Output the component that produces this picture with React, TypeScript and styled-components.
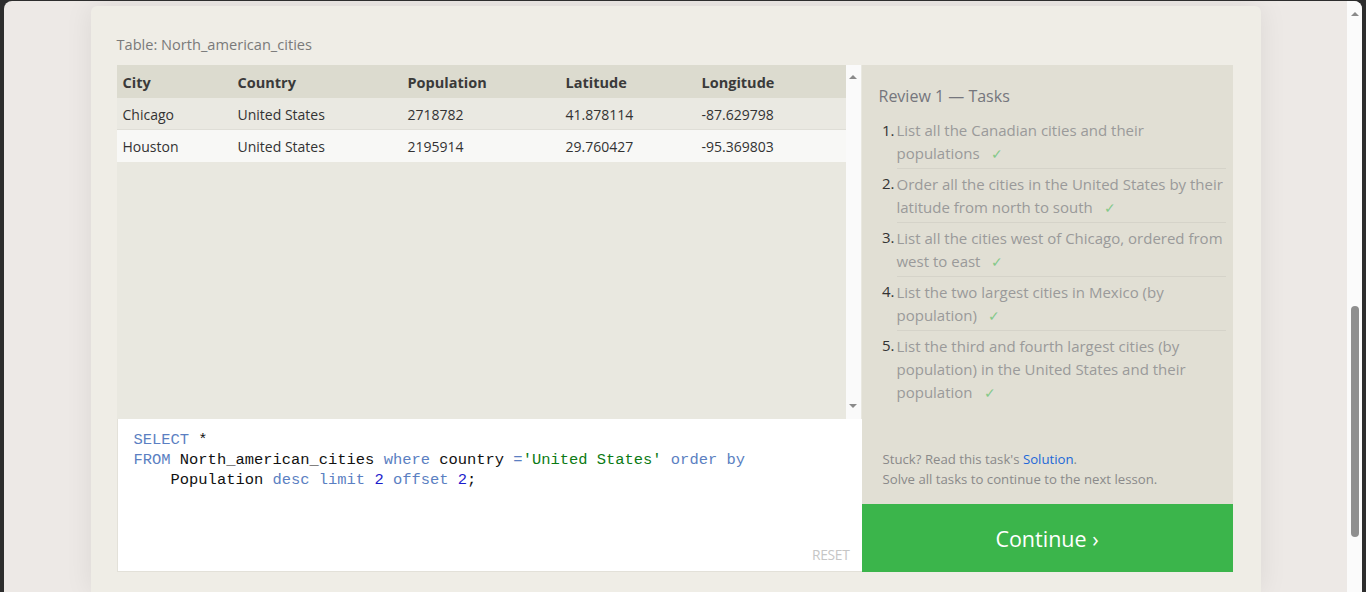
import React from 'react';
import styled, { createGlobalStyle } from 'styled-components';

const GlobalStyle = createGlobalStyle`
  html, body {
    margin: 0;
    padding: 0;
    background: #2d2d2d;
    overflow: hidden;
  }
`;

const Frame = styled.div`
  height: 592px;
  padding: 1px 4px 0 4px;
  box-sizing: border-box;
  display: flex;
`;

const Window = styled.div`
  flex: 1;
  display: flex;
  background: #ede9e6;
  border-radius: 8px 8px 0 0;
  overflow: hidden;
`;

const Page = styled.div`
  flex: 1;
  display: flex;
  justify-content: center;
  padding-top: 5px;
  overflow: hidden;
`;

const Card = styled.div`
  width: 1170px;
  background: #efede6;
  border-radius: 6px 6px 0 0;
  box-shadow: 0 0 28px rgba(0, 0, 0, 0.08);
  padding: 28px 28px 0 26px;
  box-sizing: border-box;
  font-family: 'Open Sans', 'Noto Sans', sans-serif;
`;

const TableLabel = styled.div`
  font-size: 14.6px;
  line-height: 20px;
  color: #7a7a7a;
  margin-bottom: 11px;
`;

const Workspace = styled.div`
  display: flex;
  height: 507px;
`;

const LeftColumn = styled.div`
  width: 745px;
  display: flex;
  flex-direction: column;
`;

const TableArea = styled.div`
  height: 354px;
  display: flex;
  background: #e9e8e0;
`;

const TableBody = styled.div`
  flex: 1;
`;

const Row = styled.div<{ $variant: 'head' | 'odd' | 'even' }>`
  display: grid;
  grid-template-columns: 115px 170px 158px 136px 1fr;
  height: ${(p) => (p.$variant === 'head' ? '33px' : '32px')};
  align-items: center;
  background: ${(p) =>
    p.$variant === 'head' ? '#dcdbcf' : p.$variant === 'odd' ? '#eae9e2' : '#f8f8f6'};
  border-bottom: ${(p) => (p.$variant === 'odd' ? '1px solid #dfded7' : 'none')};
  font-size: ${(p) => (p.$variant === 'head' ? '14.5px' : '14px')};
  font-weight: ${(p) => (p.$variant === 'head' ? 700 : 400)};
  color: ${(p) => (p.$variant === 'head' ? '#3a3a3a' : '#333')};
  padding-top: ${(p) => (p.$variant === 'odd' || p.$variant === 'head' ? '1px' : '0')};
  box-sizing: border-box;
`;

const Cell = styled.div`
  padding-left: 6px;
  white-space: nowrap;
`;

const InnerScroll = styled.div`
  width: 15px;
  background: #fafafa;
  display: flex;
  flex-direction: column;
  justify-content: space-between;
  align-items: center;
  padding: 10px 0 11px;
  box-sizing: border-box;
  margin-right: 1px;
`;

const Arrow = styled.div<{ $down?: boolean }>`
  width: 0;
  height: 0;
  border-left: 4px solid transparent;
  border-right: 4px solid transparent;
  ${(p) =>
    p.$down ? 'border-top: 4px solid #8a8a8a;' : 'border-bottom: 4px solid #8a8a8a;'}
`;

const Editor = styled.div`
  flex: 1;
  background: #fff;
  border-left: 1px solid #e3e1d9;
  border-bottom: 1px solid #e3e1d9;
  display: flex;
  flex-direction: column;
  padding: 11px 12px 7px 16px;
`;

const Code = styled.pre`
  flex: 1;
  margin: 0;
  font-family: 'Liberation Mono', 'DejaVu Sans Mono', monospace;
  font-size: 15.45px;
  line-height: 20px;
  color: #111;
`;

const Kw = styled.span`
  color: #5b7fc2;
`;

const Num = styled.span`
  color: #1c1ccc;
`;

const Str = styled.span`
  color: #0b7a14;
`;

const EditorFooter = styled.div`
  display: flex;
  justify-content: flex-end;
`;

const ResetButton = styled.span`
  font-size: 13.8px;
  letter-spacing: -0.3px;
  color: #c6c6c6;
  line-height: 18px;
`;

const RightColumn = styled.div`
  width: 371px;
  display: flex;
  flex-direction: column;
`;

const TaskPanel = styled.div`
  flex: 1;
  background: #e1dfd4;
  padding: 20px 7px 15px 17px;
  display: flex;
  flex-direction: column;
`;

const PanelTitle = styled.div`
  font-size: 16px;
  line-height: 22px;
  color: #75767d;
  margin-bottom: 8px;
`;

const TaskList = styled.ol`
  list-style: none;
  margin: 0;
  padding: 0;
`;

const TaskItem = styled.li`
  display: flex;
  & + & > div:last-child {
    border-top: 1px solid #d5d3c9;
  }
`;

const TaskNumber = styled.span`
  width: 18px;
  flex: none;
  text-align: right;
  padding-right: 2px;
  box-sizing: border-box;
  font-size: 15px;
  line-height: 23px;
  color: #333;
  padding-top: 4px;
`;

const TaskText = styled.div`
  flex: 1;
  font-size: 15px;
  line-height: 23px;
  color: #9a9a9a;
  padding: 4px 0 3px;
`;

const Check = styled.span`
  display: inline-block;
  color: #84c98a;
  margin-left: 11px;
  font-size: 14px;
  line-height: 14px;
`;

const Help = styled.div`
  margin-top: auto;
  padding-left: 4px;
  font-size: 13.2px;
  line-height: 20px;
  color: #8a8a8a;
`;

const Link = styled.a`
  color: #2168d8;
  text-decoration: none;
`;

const ContinueButton = styled.button`
  height: 68px;
  border: none;
  background: #3bb54b;
  color: #fff;
  font-family: 'Open Sans', 'Noto Sans', sans-serif;
  font-size: 21.5px;
  cursor: pointer;
`;

const PageScroll = styled.div`
  width: 15px;
  background: #fbfbfb;
  display: flex;
  flex-direction: column;
  align-items: center;
  padding-top: 11px;
  box-sizing: border-box;
`;

const Thumb = styled.div`
  width: 8px;
  height: 231px;
  margin-top: 290px;
  border-radius: 4px;
  background: #8f8f8f;
`;

const columns = ['City', 'Country', 'Population', 'Latitude', 'Longitude'];

const rows = [
  ['Chicago', 'United States', '2718782', '41.878114', '-87.629798'],
  ['Houston', 'United States', '2195914', '29.760427', '-95.369803'],
];

const tasks = [
  'List all the Canadian cities and their populations',
  'Order all the cities in the United States by their latitude from north to south',
  'List all the cities west of Chicago, ordered from west to east',
  'List the two largest cities in Mexico (by population)',
  'List the third and fourth largest cities (by population) in the United States and their population',
];

export default function App() {
  return (
    <>
      <GlobalStyle />
      <Frame>
        <Window>
          <Page>
            <Card>
              <TableLabel>Table: North_american_cities</TableLabel>
              <Workspace>
                <LeftColumn>
                  <TableArea>
                    <TableBody>
                      <Row $variant="head">
                        {columns.map((c) => (
                          <Cell key={c}>{c}</Cell>
                        ))}
                      </Row>
                      {rows.map((r, i) => (
                        <Row key={r[0]} $variant={i % 2 === 0 ? 'odd' : 'even'}>
                          {r.map((v, j) => (
                            <Cell key={j}>{v}</Cell>
                          ))}
                        </Row>
                      ))}
                    </TableBody>
                    <InnerScroll>
                      <Arrow />
                      <Arrow $down />
                    </InnerScroll>
                  </TableArea>
                  <Editor>
                    <Code>
                      <Kw>SELECT</Kw> *{'\n'}
                      <Kw>FROM</Kw> North_american_cities <Kw>where</Kw> country{' '}
                      <Kw>=</Kw>
                      <Str>'United States'</Str> <Kw>order by</Kw>
                      {'\n    '}Population <Kw>desc</Kw> <Kw>limit</Kw> <Num>2</Num>{' '}
                      <Kw>offset</Kw> <Num>2</Num>;
                    </Code>
                    <EditorFooter>
                      <ResetButton>RESET</ResetButton>
                    </EditorFooter>
                  </Editor>
                </LeftColumn>
                <RightColumn>
                  <TaskPanel>
                    <PanelTitle>Review 1 — Tasks</PanelTitle>
                    <TaskList>
                      {tasks.map((t, i) => (
                        <TaskItem key={i}>
                          <TaskNumber>{i + 1}.</TaskNumber>
                          <TaskText>
                            {t}
                            <Check>✓</Check>
                          </TaskText>
                        </TaskItem>
                      ))}
                    </TaskList>
                    <Help>
                      Stuck? Read this task's <Link href="#">Solution</Link>.
                      <br />
                      Solve all tasks to continue to the next lesson.
                    </Help>
                  </TaskPanel>
                  <ContinueButton>Continue ›</ContinueButton>
                </RightColumn>
              </Workspace>
            </Card>
          </Page>
          <PageScroll>
            <Arrow />
            <Thumb />
          </PageScroll>
        </Window>
      </Frame>
    </>
  );
}
